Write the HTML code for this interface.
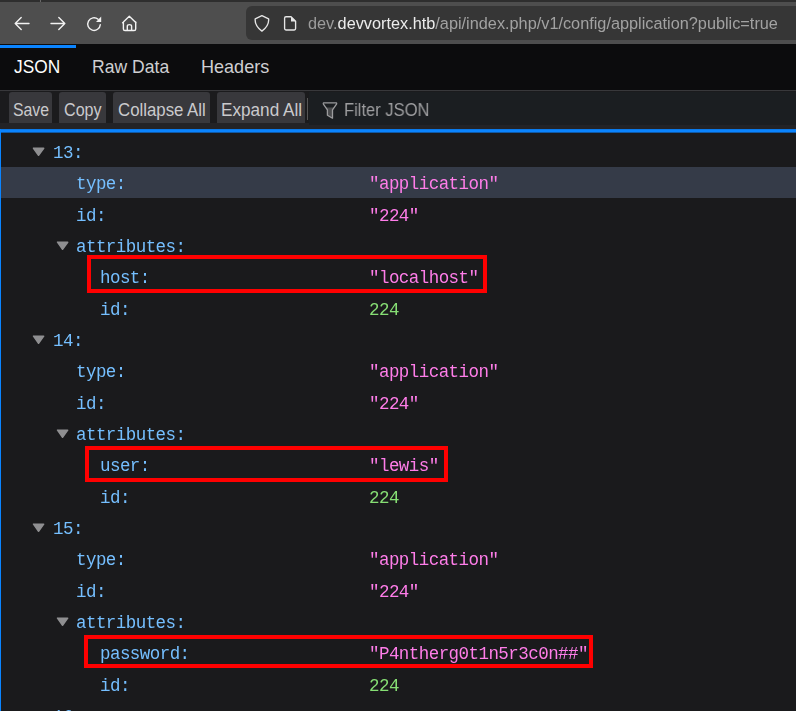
<!DOCTYPE html>
<html><head><meta charset="utf-8">
<style>
html,body{margin:0;padding:0}
body{width:796px;height:711px;overflow:hidden;position:relative;background:#1a1a1c;font-family:"Liberation Sans",sans-serif}
.a{position:absolute;white-space:pre}
#nav{left:0;top:0;width:796px;height:44px;background:#4e4e4e}
#strip{left:0;top:0;width:796px;height:2px;background:#2e2e2e}
#url{left:246px;top:6px;width:600px;height:34px;background:#363636;border-radius:6px}
.ut{font-size:16.3px;color:#a2a2a2;top:14px;transform-origin:0 0;will-change:transform}
#tabs{left:0;top:44px;width:796px;height:46px;background:#0c0c0d}
#tabline{left:0;top:90px;width:796px;height:1px;background:#38383b}
#ind{left:0;top:45px;width:76px;height:3px;background:#0a84ff}
.tab{font-size:19px;color:#cfcfd2;top:56px;transform-origin:0 0}
#tb{left:0;top:91px;width:796px;height:32px;background:#1b1b1d}
#band{left:0;top:123px;width:796px;height:6px;background:#232326}
.btn{top:92px;height:31px;background:#38383c;border-radius:3px 3px 0 0}
.bt{font-size:17.5px;color:#cacacd;top:100px;transform-origin:0 0}
#filt{left:309px;top:92px;width:487px;height:33px;background:#1b1e21}
#sep{left:307px;top:98px;width:1px;height:22px;background:#555}
#blue{left:0;top:129px;width:796px;height:3px;background:#0a84ff}
#lb{left:0;top:129px;width:1px;height:582px;background:#0a84ff}
#hl{left:1px;top:167px;width:795px;height:31px;background:#353b48}
.k,.s,.n{font-family:"Liberation Mono",monospace;font-size:17.5px;letter-spacing:-0.55px;line-height:1em;will-change:transform}
.k{color:#75bfff}
.s{color:#ff7de9}
.n{color:#86de74}
.tri{width:0;height:0;border-left:6px solid transparent;border-right:6px solid transparent;border-top:8.5px solid #939395}
.box{border:4px solid #ff0000;box-sizing:border-box}
</style></head><body>
<div id="nav" class="a"></div>
<div id="strip" class="a"></div>
<div class="a" style="left:40px;top:0;width:1px;height:2px;background:#686868"></div>
<div id="url" class="a"></div>
<!--ICONS--><svg class="a" style="left:0;top:0" width="796" height="44" viewBox="0 0 796 44">
<g fill="none" stroke="#f2f2f2" stroke-width="1.4" stroke-linecap="round" stroke-linejoin="round">
<path d="M29 23.5H15.2M21.2 17.6L15.2 23.5L21.2 29.4"/>
<path d="M51 23.5H64.8M58.8 17.6L64.8 23.5L58.8 29.4"/>
<path d="M98.1 19.3A6.3 6.3 0 1 0 100.3 24.6"/>
<path d="M122.6 22.8L129.3 16.3L136 22.8M123.4 22V28.9Q123.4 30.5 125 30.5H134.1Q135.7 30.5 135.7 28.9V22M127.3 30.5V26.3Q127.3 24.6 129.4 24.6Q131.6 24.6 131.6 26.3V30.5"/>
</g>
<path d="M96 22L101.2 16.6V22Z" fill="#f2f2f2"/>
<g fill="none" stroke="#e6e6e6" stroke-width="1.35" stroke-linejoin="round">
<path d="M261.9 15.6L268.6 18.8Q269.3 25.5 261.9 31.1Q254.5 25.5 255.2 18.8Z"/>
<path d="M291 16.7H286Q284.6 16.7 284.6 18.1V28.6Q284.6 30 286 30H294.3Q295.6 30 295.6 28.6V21.3Z"/>
</g>
<path d="M291 16.5L296 21.5H291Z" fill="#e6e6e6"/>
</svg><!--/ICONS-->
<div class="a ut" style="left:308px"><span style="color:#9c9c9c">dev.</span><span style="color:#ececec">devvortex.htb</span>/api/index.php/v1/config/application?public=true</div>

<div id="tabs" class="a"></div>
<div id="tabline" class="a"></div>
<div id="ind" class="a"></div>
<div class="a tab" style="left:14px;color:#fff;transform:scaleX(0.91)">JSON</div>
<div class="a tab" style="left:92px;transform:scaleX(0.925)">Raw Data</div>
<div class="a tab" style="left:201px;transform:scaleX(0.95)">Headers</div>

<div id="tb" class="a"></div>
<div id="band" class="a"></div>
<div class="a btn" style="left:9px;width:43px"></div>
<div class="a btn" style="left:59px;width:47px"></div>
<div class="a btn" style="left:113px;width:97px"></div>
<div class="a btn" style="left:217px;width:88px"></div>
<div class="a bt" style="left:13px;transform:scaleX(0.905)">Save</div>
<div class="a bt" style="left:64px;transform:scaleX(0.92)">Copy</div>
<div class="a bt" style="left:118px;transform:scaleX(0.96)">Collapse All</div>
<div class="a bt" style="left:221px;transform:scaleX(0.98)">Expand All</div>
<div id="filt" class="a"></div>
<div id="sep" class="a"></div>
<svg class="a" style="left:316px;top:96px" width="30" height="28" viewBox="316 96 30 28">
<path d="M325.5 107.5H334.6L332.5 110.2V118.2L327.4 115.2V110.2Z" fill="#4b4c4e"/>
<path d="M323.8 102.9H336.2Q337 103.2 336.5 104.1L332.5 109.8V118.2L327.4 115.2V109.8L323.4 104.1Q323 103.2 323.8 102.9Z" fill="none" stroke="#9c9c9e" stroke-width="1.3" stroke-linejoin="round"/>
</svg>
<div class="a bt" style="left:344px;color:#9e9ea0;transform:scaleX(0.945);will-change:transform">Filter JSON</div>

<svg class="a" style="left:0;top:120px" width="796" height="20"><rect x="0" y="9.1" width="796" height="3.5" fill="#0a84ff"/></svg>
<div id="lb" class="a"></div>
<div id="hl" class="a"></div>
<!--ROWS-->
<svg class="a" style="left:0;top:0" width="80" height="711"><path d="M33.50 148.20H43.70L38.55 155.30Z" fill="#8f8f91" stroke="#8f8f91" stroke-width="1.5" stroke-linejoin="round"/></svg>
<div class="a k" style="left:52.80px;top:144.90px">13:</div>
<div class="a k" style="left:76.20px;top:176.22px">type:</div>
<div class="a s" style="left:369.40px;top:176.22px">"application"</div>
<div class="a k" style="left:76.20px;top:207.56px">id:</div>
<div class="a s" style="left:369.40px;top:207.56px">"224"</div>
<svg class="a" style="left:0;top:0" width="80" height="711"><path d="M57.50 242.19H67.70L62.55 249.29Z" fill="#8f8f91" stroke="#8f8f91" stroke-width="1.5" stroke-linejoin="round"/></svg>
<div class="a k" style="left:76.20px;top:238.89px">attributes:</div>
<div class="a k" style="left:100.20px;top:270.22px">host:</div>
<div class="a s" style="left:369.40px;top:270.22px">"localhost"</div>
<div class="a k" style="left:100.20px;top:301.55px">id:</div>
<div class="a n" style="left:369.40px;top:301.55px">224</div>
<svg class="a" style="left:0;top:0" width="80" height="711"><path d="M33.50 336.18H43.70L38.55 343.28Z" fill="#8f8f91" stroke="#8f8f91" stroke-width="1.5" stroke-linejoin="round"/></svg>
<div class="a k" style="left:52.80px;top:332.88px">14:</div>
<div class="a k" style="left:76.20px;top:364.21px">type:</div>
<div class="a s" style="left:369.40px;top:364.21px">"application"</div>
<div class="a k" style="left:76.20px;top:395.54px">id:</div>
<div class="a s" style="left:369.40px;top:395.54px">"224"</div>
<svg class="a" style="left:0;top:0" width="80" height="711"><path d="M57.50 430.17H67.70L62.55 437.27Z" fill="#8f8f91" stroke="#8f8f91" stroke-width="1.5" stroke-linejoin="round"/></svg>
<div class="a k" style="left:76.20px;top:426.87px">attributes:</div>
<div class="a k" style="left:100.20px;top:458.19px">user:</div>
<div class="a s" style="left:369.40px;top:458.19px">"lewis"</div>
<div class="a k" style="left:100.20px;top:489.53px">id:</div>
<div class="a n" style="left:369.40px;top:489.53px">224</div>
<svg class="a" style="left:0;top:0" width="80" height="711"><path d="M33.50 524.16H43.70L38.55 531.26Z" fill="#8f8f91" stroke="#8f8f91" stroke-width="1.5" stroke-linejoin="round"/></svg>
<div class="a k" style="left:52.80px;top:520.86px">15:</div>
<div class="a k" style="left:76.20px;top:552.18px">type:</div>
<div class="a s" style="left:369.40px;top:552.18px">"application"</div>
<div class="a k" style="left:76.20px;top:583.52px">id:</div>
<div class="a s" style="left:369.40px;top:583.52px">"224"</div>
<svg class="a" style="left:0;top:0" width="80" height="711"><path d="M57.50 618.15H67.70L62.55 625.25Z" fill="#8f8f91" stroke="#8f8f91" stroke-width="1.5" stroke-linejoin="round"/></svg>
<div class="a k" style="left:76.20px;top:614.85px">attributes:</div>
<div class="a k" style="left:100.20px;top:646.17px">password:</div>
<div class="a s" style="left:369.40px;top:646.17px">"P4ntherg0t1n5r3c0n##"</div>
<div class="a k" style="left:100.20px;top:677.51px">id:</div>
<div class="a n" style="left:369.40px;top:677.51px">224</div>
<svg class="a" style="left:0;top:0" width="80" height="711"><path d="M33.50 712.14H43.70L38.55 719.24Z" fill="#8f8f91" stroke="#8f8f91" stroke-width="1.5" stroke-linejoin="round"/></svg>
<div class="a k" style="left:52.80px;top:708.84px">16:</div>
<div class="a box" style="left:87.0px;top:255.0px;width:400.0px;height:38.0px"></div>
<div class="a box" style="left:85.0px;top:446.0px;width:363.0px;height:36.0px"></div>
<div class="a box" style="left:84.0px;top:635.0px;width:509.0px;height:33.0px"></div>
<!--/ROWS-->
</body></html>
